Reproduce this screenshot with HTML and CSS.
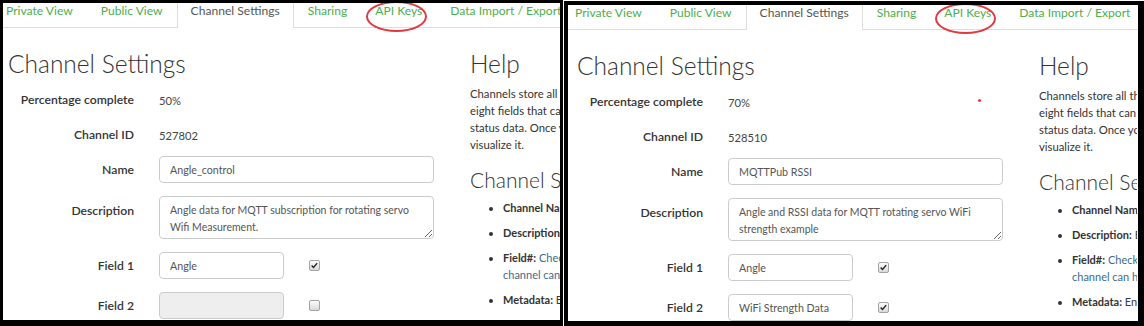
FILE: index.html
```html
<!DOCTYPE html>
<html lang="en">
<head>
<meta charset="utf-8">
<title>Channel Settings</title>
<link rel="stylesheet" href="styles.css">
</head>
<body>
<div class="stage">
  <section class="shot shot-a">
    <nav class="tabs">
      <span class="tab">Private View</span>
      <span class="tab">Public View</span>
      <span class="tab tab-active">Channel Settings</span>
      <span class="tab">Sharing</span>
      <span class="tab tab-marked">API Keys<span class="ring"></span></span>
      <span class="tab">Data Import / Export</span>
    </nav>
    <div class="page">
      <div class="main">
        <h1 class="title">Channel Settings</h1>
        <div class="form">
          <div class="row row-static"><span class="lbl">Percentage complete</span><span class="val">50%</span></div>
          <div class="row row-static"><span class="lbl">Channel ID</span><span class="val">527802</span></div>
          <div class="row"><span class="lbl">Name</span><input class="inp" type="text" value="Angle_control" readonly></div>
          <div class="row row-top"><span class="lbl">Description</span><textarea class="txt" readonly>Angle data for MQTT subscription for rotating servo Wifi Measurement.</textarea></div>
          <div class="row"><span class="lbl">Field 1</span><input class="inp inp-short" type="text" value="Angle" readonly><span class="chk is-on"><svg viewBox="0 0 11 11" width="9" height="9"><path d="M2 5.6 L4.3 7.9 L8.8 2.6" fill="none" stroke="#222" stroke-width="1.7"/></svg></span></div>
          <div class="row"><span class="lbl">Field 2</span><input class="inp inp-short" type="text" value="" disabled><span class="chk"></span></div>
        </div>
      </div>
      <aside class="help help-a">
        <h1 class="title title-help">Help</h1>
        <p class="help-text"><span class="ln">Channels store all the data that a ThingSpeak application collects. Each channel includes</span><span class="ln">eight fields that can hold any type of data, plus three fields for location data and one for</span><span class="ln">status data. Once you collect data in a channel, you can use ThingSpeak apps to analyze and</span><span class="ln">visualize it.</span></p>
        <h3 class="sub">Channel Settings</h3>
        <ul class="help-list">
          <li><b>Channel Name:</b> <span class="d">Enter a unique name for the ThingSpeak channel.</span></li>
          <li><b>Description:</b> <span class="d">Enter a description of the ThingSpeak channel.</span></li>
          <li><b>Field#:</b> <span class="d blue">Check the box to enable the field, and enter a field name. Each ThingSpeak<br>channel can have up to 8 fields.</span></li>
          <li><b>Metadata:</b> <span class="d">Enter information about channel data, including JSON, XML, or CSV data.</span></li>
          <li><b>Tags:</b> <span class="d blue">Enter keywords that identify the channel. Separate tags with commas.</span></li>
        </ul>
      </aside>
    </div>
  </section>

  <section class="shot shot-b">
    <nav class="tabs">
      <span class="tab">Private View</span>
      <span class="tab">Public View</span>
      <span class="tab tab-active">Channel Settings</span>
      <span class="tab">Sharing</span>
      <span class="tab tab-marked">API Keys<span class="ring"></span></span>
      <span class="tab">Data Import / Export</span>
    </nav>
    <div class="page">
      <span class="dot"></span>
      <div class="main">
        <h1 class="title">Channel Settings</h1>
        <div class="form">
          <div class="row row-static"><span class="lbl">Percentage complete</span><span class="val">70%</span></div>
          <div class="row row-static"><span class="lbl">Channel ID</span><span class="val">528510</span></div>
          <div class="row"><span class="lbl">Name</span><input class="inp" type="text" value="MQTTPub RSSI" readonly></div>
          <div class="row row-top"><span class="lbl">Description</span><textarea class="txt" readonly>Angle and RSSI data for MQTT rotating servo WiFi strength example</textarea></div>
          <div class="row"><span class="lbl">Field 1</span><input class="inp inp-short" type="text" value="Angle" readonly><span class="chk is-on"><svg viewBox="0 0 11 11" width="9" height="9"><path d="M2 5.6 L4.3 7.9 L8.8 2.6" fill="none" stroke="#222" stroke-width="1.7"/></svg></span></div>
          <div class="row"><span class="lbl">Field 2</span><input class="inp inp-short" type="text" value="WiFi Strength Data" readonly><span class="chk is-on"><svg viewBox="0 0 11 11" width="9" height="9"><path d="M2 5.6 L4.3 7.9 L8.8 2.6" fill="none" stroke="#222" stroke-width="1.7"/></svg></span></div>
        </div>
      </div>
      <aside class="help help-b">
        <h1 class="title title-help">Help</h1>
        <p class="help-text"><span class="ln">Channels store all the data that a ThingSpeak application collects. Each channel includes</span><span class="ln">eight fields that can hold any type of data, plus three fields for location data and one for</span><span class="ln">status data. Once you collect data in a channel, you can use ThingSpeak apps to analyze and</span><span class="ln">visualize it.</span></p>
        <h3 class="sub">Channel Settings</h3>
        <ul class="help-list">
          <li><b>Channel Name:</b> <span class="d">Enter a unique name for the ThingSpeak channel.</span></li>
          <li><b>Description:</b> <span class="d">Enter a description of the ThingSpeak channel.</span></li>
          <li><b>Field#:</b> <span class="d blue">Check the box to enable the field, and enter a field name. Each ThingSpeak<br>channel can have up to 8 fields.</span></li>
          <li><b>Metadata:</b> <span class="d">Enter information about channel data, including JSON, XML, or CSV data.</span></li>
          <li><b>Tags:</b> <span class="d blue">Enter keywords that identify the channel. Separate tags with commas.</span></li>
        </ul>
      </aside>
    </div>
  </section>
</div>
</body>
</html>
```

FILE: styles.css
```css
* { box-sizing: border-box; }
html, body { margin: 0; padding: 0; }
body {
  width: 1144px;
  height: 326px;
  overflow: hidden;
  background: #fff;
  font-family: Lato, "Open Sans", sans-serif;
  color: #333;
}
.stage {
  display: flex;
  align-items: flex-start;
  height: 326px;
}
.shot {
  overflow: hidden;
  border: 3px solid #000;
  background: #fff;
  flex: none;
}
.shot-a {
  width: 563px;
  height: 326px;
  border-width: 3px 3px 6px 3px;
}
.shot-b {
  width: 580px;
  height: 325px;
  margin: 1px 0 0 1px;
  border-width: 4px 6px 5px 4px;
  padding-left: 4px;
}

/* tabs */
.tabs {
  display: flex;
  height: 25px;
  margin-left: -11px;
  border-bottom: 1px solid #ddd;
  font-size: 12.1px;
  line-height: 16px;
  white-space: nowrap;
}
.tab {
  position: relative;
  flex: none;
  padding: 0 14px;
  color: #4cae4c;
}
.tab-active {
  height: 25px;
  margin-bottom: -1px;
  padding: 0 13px;
  border-left: 1px solid #ddd;
  border-right: 1px solid #ddd;
  background: #fff;
  color: #555;
}
.ring {
  position: absolute;
  left: 5px;
  top: -2px;
  width: 61px;
  height: 31px;
  border: 2px solid #e2383f;
  border-radius: 50%;
}

/* page */
.page {
  position: relative;
  display: flex;
  gap: 36px;
}
.main {
  flex: none;
  width: 431px;
}
.title {
  margin: 21px 0 0 5px;
  font-size: 24.5px;
  font-weight: 300;
  line-height: 30px;
  color: #333;
  white-space: nowrap;
}
.title-help { margin-left: 0; }

.form { margin-top: 7px; }
.row {
  display: flex;
  align-items: center;
  gap: 25px;
  margin-bottom: 13px;
}
.row-static {
  height: 28px;
  margin-bottom: 7px;
}
.row-top { align-items: flex-start; }
.lbl {
  flex: none;
  width: 131px;
  text-align: right;
  font-size: 12.2px;
  font-weight: 600;
  line-height: 20px;
  color: #333;
}
.row-top .lbl { padding-top: 5px; }
.val {
  font-size: 11.2px;
  color: #444;
}
.inp {
  flex: none;
  width: 275px;
  height: 27px;
  margin: 0;
  padding: 0 10px;
  border: 1px solid #ccc;
  border-radius: 4px;
  background: #fff;
  font-family: Lato, "Open Sans", sans-serif;
  font-size: 10.7px;
  color: #555;
  outline: none;
}
.inp-short { width: 125px; }
.inp:disabled { background: #eee; }
.txt {
  flex: none;
  display: block;
  width: 275px;
  height: 43px;
  margin: 0;
  padding: 5px 10px;
  border: 1px solid #ccc;
  border-radius: 4px;
  font-family: Lato, "Open Sans", sans-serif;
  font-size: 10.5px;
  line-height: 17px;
  color: #555;
  resize: vertical;
  overflow: hidden;
  outline: none;
}
.chk {
  flex: none;
  display: flex;
  align-items: center;
  justify-content: center;
  width: 11px;
  height: 11px;
  border: 1px solid #a3a3a3;
  border-radius: 2px;
  background: linear-gradient(#fbfbfb, #dadada);
}

/* help */
.help {
  flex: none;
  overflow: hidden;
}
.help-a { width: 91px; }
.help-b { width: 98px; }
.help-text {
  margin: 5.5px 0 0;
  font-size: 11.3px;
  line-height: 17px;
  color: #333;
}
.ln {
  display: block;
  white-space: nowrap;
}
.sub {
  margin: 14.5px 0 0;
  font-size: 21px;
  font-weight: 300;
  line-height: 26px;
  color: #333;
  white-space: nowrap;
}
.help-list {
  margin: 5.5px 0 0;
  padding-left: 33px;
  font-size: 11px;
  line-height: 17px;
  white-space: nowrap;
}
.help-list li { margin-bottom: 8px; }
.help-list b { font-weight: 700; color: #333; }
.d { color: #3a3a3a; }
.d.blue { color: #3d6a8e; }

.dot {
  position: absolute;
  left: 406px;
  top: 69px;
  width: 3px;
  height: 3px;
  border-radius: 50%;
  background: #e53935;
}
```
